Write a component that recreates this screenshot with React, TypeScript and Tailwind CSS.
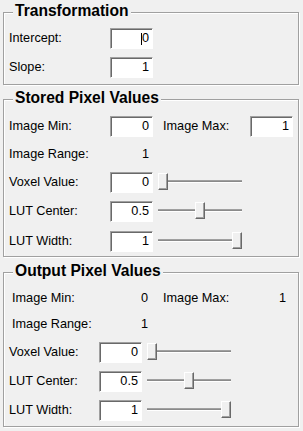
import React from "react";

interface GroupProps {
  title: string;
  className?: string;
  children: React.ReactNode;
}

function GroupBox({ title, className, children }: GroupProps) {
  return (
    <div
      className={
        "relative w-[296px] border border-[#a0a0a0] shadow-[inset_1px_1px_0_#fff,1px_1px_0_#fff] pl-[5px] " +
        (className ?? "")
      }
    >
      <span className="absolute left-[9px] top-[-11px] bg-[#f0f0f0] px-[2px] text-[15.6px] leading-[18px] font-bold text-black">
        {title}
      </span>
      {children}
    </div>
  );
}

function Field({ value, caret, className }: { value: string; caret?: boolean; className?: string }) {
  return (
    <div
      className={
        "flex h-[21px] w-[43px] items-center justify-end border border-t-[#a0a0a0] border-l-[#a0a0a0] border-r-white border-b-white bg-white pr-[3px] shadow-[inset_1px_1px_0_#696969] text-black " +
        (className ?? "")
      }
    >
      {caret && <span className="h-[12px] w-px bg-black" />}
      <span>{value}</span>
    </div>
  );
}

function Slider({ value, width }: { value: number; width: number }) {
  const travel = width - 10;
  return (
    <div className="relative h-[21px] ml-[5px]" style={{ width }}>
      {/* track */}
      <div className="absolute left-0 right-0 top-[8px] h-[3px] border-t border-b border-t-[#a0a0a0] border-b-white bg-[#8a8a8a]" />
      {/* thumb */}
      <div
        className="absolute top-[1px] h-[17px] w-[10px] bg-[#f0f0f0] border border-t-white border-l-white border-r-[#696969] border-b-[#696969] shadow-[inset_-1px_-1px_0_#a0a0a0]"
        style={{ left: Math.round(value * travel) }}
      />
    </div>
  );
}

function Label({ text, className }: { text: string; className: string }) {
  return <div className={"shrink-0 " + className}>{text}</div>;
}

export default function App() {
  return (
    <div className="w-[303px] h-[431px] overflow-hidden bg-[#f0f0f0] pt-[12px] px-[3px] font-['Liberation_Sans',Arial,sans-serif] text-[12.7px] leading-[21px] text-black">
      {/* Transformation */}
      <GroupBox title="Transformation" className="h-[73px] pt-[15px]">
        <div className="flex flex-col gap-[8px]">
          <div className="flex h-[21px] items-center">
            <Label text="Intercept:" className="w-[101px]" />
            <Field value="0" caret />
          </div>
          <div className="flex h-[21px] items-center">
            <Label text="Slope:" className="w-[101px]" />
            <Field value="1" />
          </div>
        </div>
      </GroupBox>

      {/* Stored */}
      <GroupBox title="Stored Pixel Values" className="mt-[14px] h-[158px] pt-[16px]">
        <div className="flex h-[21px] items-center">
          <Label text="Image Min:" className="w-[101px]" />
          <Field value="0" />
          <Label text="Image Max:" className="ml-[10px] w-[87px]" />
          <Field value="1" />
        </div>
        <div className="mt-[7px] flex h-[21px] items-center">
          <Label text="Image Range:" className="w-[101px]" />
          <div className="w-[43px] pr-[4px] text-right">1</div>
        </div>
        <div className="mt-[7px] flex h-[21px] items-center">
          <Label text="Voxel Value:" className="w-[101px]" />
          <Field value="0" />
          <Slider value={0} width={84} />
        </div>
        <div className="mt-[8px] flex h-[21px] items-center">
          <Label text="LUT Center:" className="w-[101px]" />
          <Field value="0.5" />
          <Slider value={0.5} width={84} />
        </div>
        <div className="mt-[9px] flex h-[21px] items-center">
          <Label text="LUT Width:" className="w-[101px]" />
          <Field value="1" />
          <Slider value={1} width={84} />
        </div>
      </GroupBox>

      {/* Output */}
      <GroupBox title="Output Pixel Values" className="mt-[15px] h-[155px] pt-[15px]">
        <div className="flex h-[21px] items-center pl-[3px]">
          <Label text="Image Min:" className="w-[98px]" />
          <div className="w-[38px] text-right">0</div>
          <Label text="Image Max:" className="ml-[15px] w-[87px]" />
          <div className="w-[36px] text-right">1</div>
        </div>
        <div className="mt-[5px] flex h-[21px] items-center pl-[3px]">
          <Label text="Image Range:" className="w-[98px]" />
          <div className="w-[38px] text-right">1</div>
        </div>
        <div className="mt-[7px] flex h-[21px] items-center">
          <Label text="Voxel Value:" className="w-[90px]" />
          <Field value="0" />
          <Slider value={0} width={84} />
        </div>
        <div className="mt-[8px] flex h-[21px] items-center">
          <Label text="LUT Center:" className="w-[90px]" />
          <Field value="0.5" />
          <Slider value={0.5} width={84} />
        </div>
        <div className="mt-[8px] flex h-[21px] items-center">
          <Label text="LUT Width:" className="w-[90px]" />
          <Field value="1" />
          <Slider value={1} width={84} />
        </div>
      </GroupBox>
    </div>
  );
}
